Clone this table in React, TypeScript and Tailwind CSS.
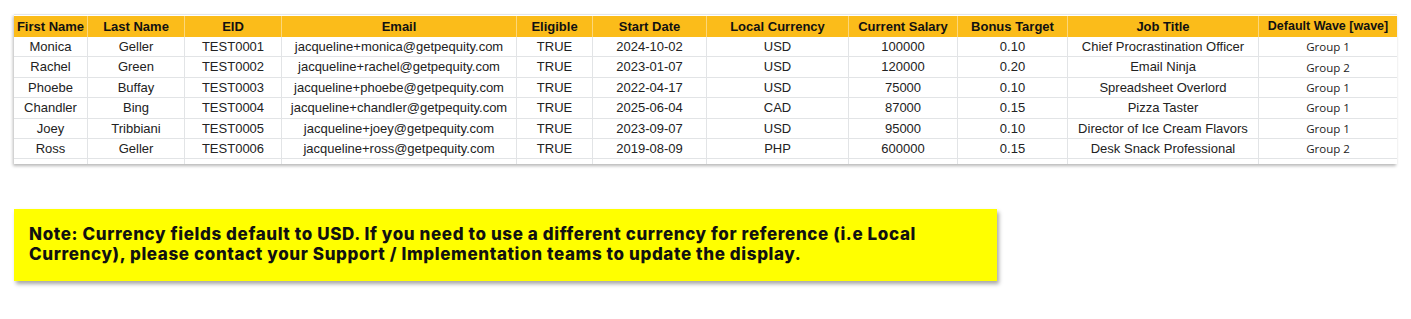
const cols = [74, 97, 97, 235, 76, 114, 142, 109, 110, 191, 138];

const headers = [
  "First Name",
  "Last Name",
  "EID",
  "Email",
  "Eligible",
  "Start Date",
  "Local Currency",
  "Current Salary",
  "Bonus Target",
  "Job Title",
  "Default Wave [wave]",
];

const rows = [
  ["Monica", "Geller", "TEST0001", "jacqueline+monica@getpequity.com", "TRUE", "2024-10-02", "USD", "100000", "0.10", "Chief Procrastination Officer", "Group 1"],
  ["Rachel", "Green", "TEST0002", "jacqueline+rachel@getpequity.com", "TRUE", "2023-01-07", "USD", "120000", "0.20", "Email Ninja", "Group 2"],
  ["Phoebe", "Buffay", "TEST0003", "jacqueline+phoebe@getpequity.com", "TRUE", "2022-04-17", "USD", "75000", "0.10", "Spreadsheet Overlord", "Group 1"],
  ["Chandler", "Bing", "TEST0004", "jacqueline+chandler@getpequity.com", "TRUE", "2025-06-04", "CAD", "87000", "0.15", "Pizza Taster", "Group 1"],
  ["Joey", "Tribbiani", "TEST0005", "jacqueline+joey@getpequity.com", "TRUE", "2023-09-07", "USD", "95000", "0.10", "Director of Ice Cream Flavors", "Group 1"],
  ["Ross", "Geller", "TEST0006", "jacqueline+ross@getpequity.com", "TRUE", "2019-08-09", "PHP", "600000", "0.15", "Desk Snack Professional", "Group 2"],
];

const gridCols = cols.map((w) => `${w}px`).join(" ");

export default function App() {
  return (
    <div className="w-[1411px] h-[319px] bg-white pt-[14px] pl-[14px]">
      {/* sheet */}
      <div className="w-[1383px] bg-white border-t border-[#e3e6ea] pt-px shadow-[-1px_2px_3px_rgba(0,0,0,0.28)] font-['Liberation_Sans',Arial,sans-serif] text-[13px] text-[#222]">
        <div className="grid h-[21px] bg-[#fbbc1a]" style={{ gridTemplateColumns: gridCols }}>
          {headers.map((h, i) => (
            <div
              key={h}
              className={`flex items-center justify-center font-bold text-[#111] whitespace-nowrap border-r border-[#fcd77a] ${i === headers.length - 1 ? "text-[12.5px] border-r-0" : ""}`}
            >
              {h}
            </div>
          ))}
        </div>
        {rows.map((r) => (
          <div
            key={r[2]}
            className="grid h-[20.4px] border-b border-[#e2e4e6]"
            style={{ gridTemplateColumns: gridCols }}
          >
            {r.map((c, i) => (
              <div
                key={i}
                className={`flex items-center justify-center whitespace-nowrap border-r border-[#e2e4e6] ${i === r.length - 1 ? "font-['Open_Sans',sans-serif] text-[11.5px] border-r-0" : ""}`}
              >
                {c}
              </div>
            ))}
          </div>
        ))}
        <div className="grid h-[5px]" style={{ gridTemplateColumns: gridCols }}>
          {cols.map((_, i) => (
            <div key={i} className={i === cols.length - 1 ? "" : "border-r border-[#e2e4e6]"} />
          ))}
        </div>
      </div>

      {/* note */}
      <div className="mt-[45px] w-[983px] h-[72px] bg-[#ffff00] shadow-[2px_3px_4px_rgba(0,0,0,0.35)] pl-[15px] pt-[15px]">
        <p className="font-['Inter',sans-serif] font-extrabold text-[17px] leading-[20px] text-[#111] tracking-[0.62px]">
          Note: Currency fields default to USD. If you need to use a different currency for reference (i.e Local
          <br />
          Currency), please contact your Support / Implementation teams to update the display.
        </p>
      </div>
    </div>
  );
}
